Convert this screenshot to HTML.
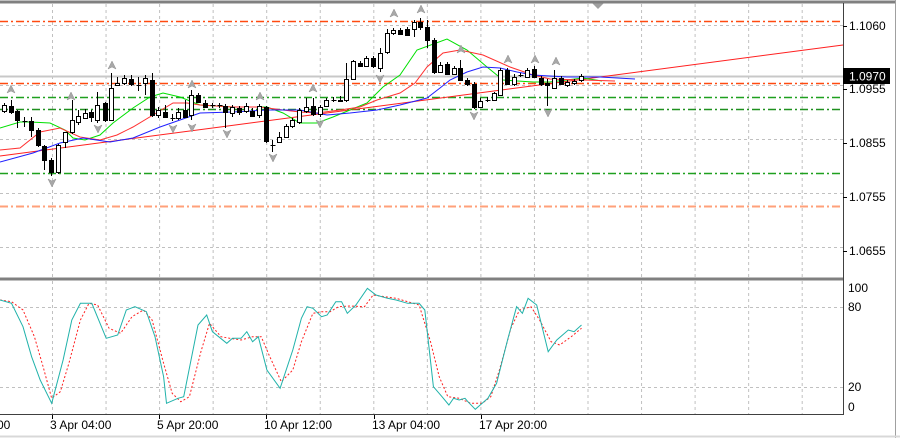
<!DOCTYPE html>
<html><head><meta charset="utf-8"><style>
html,body{margin:0;padding:0;background:#fff;width:900px;height:438px;overflow:hidden}
svg{display:block}
text{font-family:"Liberation Sans",sans-serif;font-size:12px;fill:#000}
</style></head><body>
<svg id="s" width="900" height="438" xmlns="http://www.w3.org/2000/svg">
<rect x="0" y="0" width="900" height="438" fill="#fff"/>
<g id="grid"></g>
<g id="lvl"></g>
<g id="ma"></g>
<g id="cd"></g>
<g id="fr"></g>
<g id="st"></g>
<line x1="0" y1="2" x2="896" y2="2" stroke="#808080" stroke-width="3"/>
<line x1="843.5" y1="3" x2="843.5" y2="415" stroke="#404040" stroke-width="1"/>
<line x1="0" y1="279" x2="843" y2="279" stroke="#808080" stroke-width="3"/>
<line x1="0" y1="414.5" x2="843" y2="414.5" stroke="#404040" stroke-width="1"/>
<line x1="895.5" y1="0" x2="895.5" y2="438" stroke="#a0a0a0" stroke-width="1"/>
<line x1="0" y1="436.5" x2="900" y2="436.5" stroke="#d8d8d8" stroke-width="2"/>
<g id="ax"></g>
<rect x="843" y="68" width="47" height="16" fill="#000"/>
<text x="849" y="80.5" style="fill:#fff">1.0970</text>
</svg>
<script>
var NS="http://www.w3.org/2000/svg";
function el(p,t,a){var e=document.createElementNS(NS,t);for(var k in a)e.setAttribute(k,a[k]);document.getElementById(p).appendChild(e);return e;}
for(var k=0;k<15;k++){var x=52+53.55*k+0.5;
 el("grid","line",{x1:x,y1:4,x2:x,y2:277,stroke:"#c0c0c0","stroke-dasharray":"3,3"});
 el("grid","line",{x1:x,y1:281,x2:x,y2:414,stroke:"#c0c0c0","stroke-dasharray":"3,3"});}
[25,85,139,193,247].forEach(function(y){el("grid","line",{x1:0,y1:y+.5,x2:843,y2:y+.5,stroke:"#c0c0c0","stroke-dasharray":"3,3"});});
[307,387].forEach(function(y){el("grid","line",{x1:0,y1:y+.5,x2:843,y2:y+.5,stroke:"#c0c0c0","stroke-dasharray":"3,3"});});
el("lvl","line",{x1:0,y1:76.5,x2:843,y2:76.5,stroke:"#c8c8c8","stroke-width":2});
[[21,"#ff4a10"],[83,"#ff4a10"],[206,"#ffa07a"],[97,"#1fa01f"],[109,"#1f901f"],[173,"#1fa01f"]].forEach(function(a){
 el("lvl","line",{x1:0,y1:a[0]+.5,x2:843,y2:a[0]+.5,stroke:a[1],"stroke-dasharray":"8,3,2,3","stroke-width":a[0]==206?2:1.5});});
el("ma","line",{x1:0,y1:156,x2:843,y2:45,stroke:"#ff2020","stroke-width":1});
function pl(pts,c,extra){var s=pts.map(function(p){return p[0]+","+p[1]}).join(" ");var a={points:s,fill:"none",stroke:c,"stroke-width":1};for(var k in extra)a[k]=extra[k];el(extra&&extra.g?extra.g:"ma","polyline",a);}
pl([[0,128],[20,122],[30,122],[50,123],[65,130],[73,138],[85,140],[100,135],[113,123],[133,108],[150,97],[163,93],[180,97],[200,105],[233,107],[267,107],[283,113],[300,123],[317,123],[333,117],[350,110],[367,103],[383,87],[400,75],[417,50],[447,39],[467,50],[487,67],[503,80],[533,82],[550,82],[583,78],[602,81]],"#00e000");
pl([[0,150],[20,148],[40,132],[60,128],[80,137],[100,140],[117,135],[133,127],[153,115],[173,103],[187,103],[200,105],[233,107],[260,107],[283,110],[300,112],[317,113],[340,110],[360,107],[377,100],[400,93],[415,83],[427,67],[443,53],[460,50],[483,55],[510,67],[533,75],[550,79],[583,80],[615,81]],"#ff3030");
pl([[0,162],[33,153],[60,143],[83,138],[110,142],[133,138],[160,127],[180,120],[200,113],[233,112],[267,110],[300,110],[327,115],[350,113],[377,110],[400,105],[427,98],[440,88],[450,80],[467,72],[483,67],[500,68],[517,72],[533,75],[567,77],[600,77],[635,79]],"#2020ff");
var C=[[4,111,105,103,113],[11,106,112,100,114],[17,111,120,110,128],[24,121,121,117,127],[31,121,130,117,137],[38,130,145,128,147],[44,146,160,145,170],[51,160,172,158,176],[58,172,145,144,174],[65,142,132,137,148],[72,132,120,100,134],[78,122,116,110,125],[85,118,113,109,119],[91,112,117,110,122],[97,120,105,92,123],[105,103,120,102,122],[111,120,88,73,121],[117,85,83,77,86],[124,83,78,75,85],[131,79,84,75,86],[138,85,85,77,91],[145,83,78,75,95],[152,80,115,73,117],[158,115,110,107,118],[165,112,117,105,118],[172,118,118,114,121],[178,118,112,108,120],[185,110,117,100,118],[191,115,95,90,120],[198,95,102,93,103],[205,103,107,100,108],[212,105,105,103,108],[219,105,105,103,108],[225,106,112,104,128],[232,113,107,105,117],[239,108,112,106,115],[246,111,106,103,113],[252,111,116,108,117],[259,115,106,104,118],[266,107,141,106,143],[272,145,145,140,152],[279,142,137,132,143],[286,137,126,124,138],[292,126,120,118,128],[299,122,110,108,124],[306,111,107,98,113],[313,106,114,98,116],[320,114,107,105,117],[326,106,100,98,107],[333,100,100,97,102],[340,100,101,96,102],[346,100,79,63,102],[353,79,61,60,80],[360,63,66,61,67],[366,66,58,56,67],[373,58,66,56,68],[380,68,53,48,72],[387,52,33,29,54],[393,33,30,28,35],[400,30,34,28,35],[407,29,35,27,36],[414,29,22,20,37],[420,22,27,18,30],[427,27,40,20,48],[434,40,72,38,74],[440,72,65,62,73],[447,64,74,62,75],[454,74,68,66,75],[460,68,80,60,81],[467,80,84,78,86],[474,84,107,82,109],[480,107,101,98,108],[487,100,100,97,102],[494,100,93,92,101],[500,95,70,68,96],[507,70,84,68,85],[514,84,77,74,86],[520,75,75,73,77],[527,77,70,68,78],[534,69,77,66,78],[541,78,84,76,86],[547,83,85,79,106],[554,88,78,70,89],[561,78,84,76,85],[567,85,82,80,87],[574,83,81,79,85],[581,80,76,74,82]];
C.forEach(function(c){var x=c[0]+.5;
 el("cd","line",{x1:x,y1:c[3],x2:x,y2:c[4],stroke:"#000"});
 var t=Math.min(c[1],c[2]),b=Math.max(c[1],c[2]);
 if(b-t<1){el("cd","line",{x1:x-2,y1:t+.5,x2:x+3,y2:t+.5,stroke:"#000"});}
 else el("cd","rect",{x:x-2,y:t+.5,width:4,height:b-t,fill:c[2]<c[1]?"#fff":"#000",stroke:"#000"});});
function arr(x,y,up){var d=up?"M"+x+","+(y-5)+" L"+(x+4)+","+(y+3)+" L"+x+","+(y+1)+" L"+(x-4)+","+(y+3)+"Z":"M"+x+","+(y+5)+" L"+(x+4)+","+(y-3)+" L"+x+","+(y-1)+" L"+(x-4)+","+(y-3)+"Z";el("fr","path",{d:d,fill:"#a8a8a8",stroke:"#909090","stroke-width":.5});}
[[11,90],[71,97],[112,66],[192,85],[260,97],[313,89],[394,14],[421,10],[461,50],[508,60],[535,60],[556,62]].forEach(function(p){arr(p[0],p[1],true)});
[[52,182],[98,128],[173,128],[192,127],[227,133],[273,157],[320,123],[380,78],[474,115],[548,112]].forEach(function(p){arr(p[0],p[1],false)});
el("fr","path",{d:"M592,3 L604,3 L598,9Z",fill:"#a0a0a0"});
function cv(a){return a.map(function(p){return[(p[0]/1.742).toFixed(1),(270+p[1]/3).toFixed(1)]});}
var T=[[0,90],[20,100],[40,170],[55,260],[70,330],[90,400],[110,270],[125,150],[140,100],[160,100],[185,205],[205,195],[220,120],[235,110],[255,125],[270,200],[285,320],[290,400],[310,385],[320,380],[345,165],[360,135],[370,185],[395,220],[405,205],[420,205],[430,185],[440,215],[450,200],[465,300],[488,355],[510,240],[525,145],[535,110],[545,115],[560,140],[570,135],[585,95],[595,95],[605,130],[620,105],[640,55],[655,75],[675,85],[690,90],[710,100],[730,100],[740,120],[755,350],[770,380],[782,405],[790,385],[800,390],[810,385],[815,395],[828,418],[840,400],[850,385],[865,340],[885,205],[900,110],[910,130],[920,85],[935,105],[955,245],[970,210],[990,180],[1000,185],[1013,165]];
var R=[[0,90],[20,95],[40,120],[60,200],[75,290],[90,385],[105,365],[120,280],[140,150],[155,100],[170,105],[190,175],[210,190],[230,140],[250,120],[265,150],[285,280],[300,370],[315,395],[330,380],[350,245],[365,160],[385,200],[400,205],[420,210],[440,200],[455,200],[470,260],[490,335],[510,300],[525,215],[545,130],[560,125],[575,125],[590,110],[610,108],[635,110],[650,75],[670,80],[690,85],[710,95],[730,105],[750,215],[765,320],[780,380],[800,385],[820,400],[840,400],[855,380],[870,300],[890,175],[905,120],[925,110],[940,150],[960,215],[975,225],[995,200],[1013,175]];
pl(cv(R),"#ff2020",{g:"st","stroke-dasharray":"2,2"});
pl(cv(T),"#20b2aa",{g:"st"});
function tx(x,y,s){var e=el("ax","text",{x:x,y:y});e.textContent=s;}
[[26,"1.1060"],[89,"1.0955"],[143,"1.0855"],[197,"1.0755"],[251,"1.0655"]].forEach(function(a){tx(849,a[0]+4,a[1]);el("ax","line",{x1:843,y1:a[0]+.5,x2:847,y2:a[0]+.5,stroke:"#000"});});
[[288,"100"],[307,"80"],[387,"20"],[407,"0"]].forEach(function(a){tx(848,a[0]+4,a[1]);});
[[-3,"00"],[50,"3 Apr 04:00"],[157,"5 Apr 20:00"],[264,"10 Apr 12:00"],[372,"13 Apr 04:00"],[479,"17 Apr 20:00"]].forEach(function(a){tx(a[0],429,a[1]);});
[52,159,266,374,481].forEach(function(x){el("ax","line",{x1:x+.5,y1:415,x2:x+.5,y2:419,stroke:"#000"});});
</script>
</body></html>
